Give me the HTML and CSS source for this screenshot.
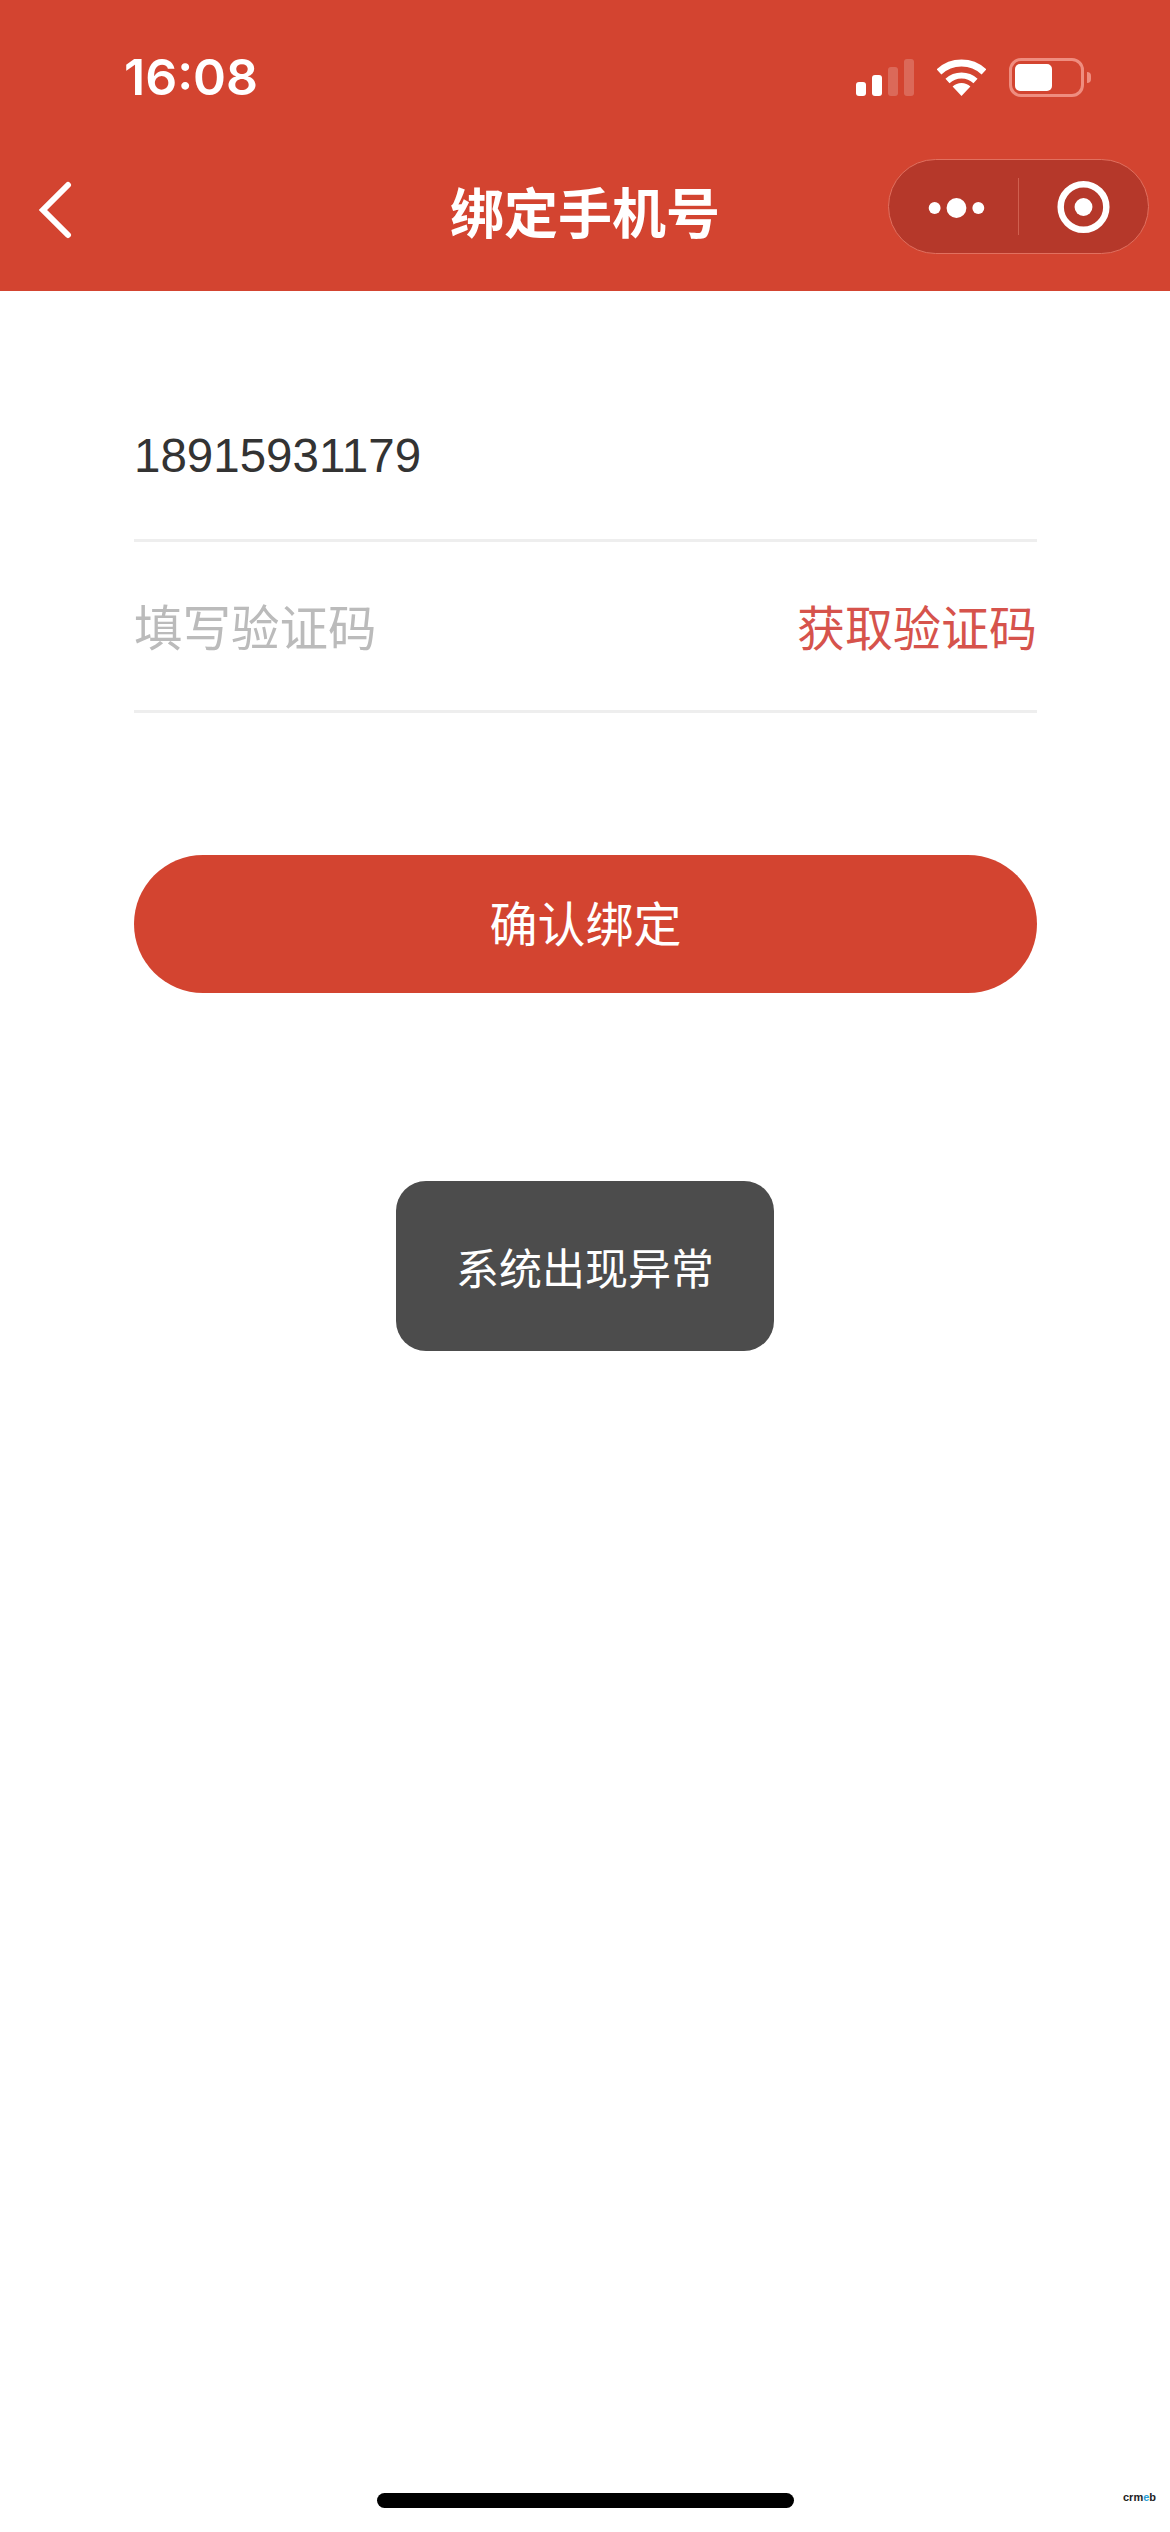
FILE: index.html
```html
<!DOCTYPE html>
<html lang="zh-CN">

<head>
    <meta charset="UTF-8">
    <meta name="viewport" content="width=device-width, initial-scale=1.0">
    <title>绑定手机号</title>
    <link rel="stylesheet" href="styles.css">
</head>
<body>
<header class="header">
    <div class="status">
        <span class="time">16:08</span>
        <div class="status-icons">
            <div class="signal">
                <i class="bar bar1"></i>
                <i class="bar bar2"></i>
                <i class="bar bar3"></i>
                <i class="bar bar4"></i>
            </div>
            <svg class="wifi" width="49" height="37" viewBox="0 0 49 37">
                <path d="M2 12.9A33 33 0 0 1 47 12.9" fill="none" stroke="#fff" stroke-width="7"/>
                <path d="M10.5 22A20.5 20.5 0 0 1 38.5 22" fill="none" stroke="#fff" stroke-width="6"/>
                <path d="M24.5 37L15.6 27.4A13 13 0 0 1 33.4 27.4Z" fill="#fff"/>
            </svg>
            <div class="battery">
                <div class="battery-box"><div class="battery-fill"></div></div>
                <div class="battery-tip"></div>
            </div>
        </div>
    </div>
    <nav class="nav">
        <svg class="back" width="34" height="58" viewBox="0 0 34 58">
            <path d="M30 4L5 29L30 54" fill="none" stroke="#fff" stroke-width="6" stroke-linecap="round"/>
        </svg>
        <h1 class="title">绑定手机号</h1>
        <div class="capsule">
            <svg class="capsule-btn" width="130" height="93" viewBox="0 0 130 93">
                <circle cx="46" cy="48" r="6" fill="#fff"/>
                <circle cx="68" cy="48" r="10" fill="#fff"/>
                <circle cx="90" cy="48" r="6" fill="#fff"/>
            </svg>
            <div class="capsule-line"></div>
            <svg class="capsule-btn" width="130" height="93" viewBox="0 0 130 93">
                <circle cx="65" cy="47" r="23" fill="none" stroke="#fff" stroke-width="6.5"/>
                <circle cx="65" cy="47" r="9" fill="#fff"/>
            </svg>
        </div>
    </nav>
</header>

<main class="form">
    <div class="row"><span class="phone">18915931179</span></div>
    <div class="row row-code">
        <span class="placeholder">填写验证码</span>
        <span class="get-code">获取验证码</span>
    </div>
    <button class="submit" type="button">确认绑定</button>
</main>

<div class="toast-wrap">
    <div class="toast">系统出现异常</div>
</div>

<div class="home-bar"></div>
<div class="mark">crm<span class="mark-e">e</span>b</div>
</body>

</html>
```

FILE: styles.css
```css
* {
    box-sizing: border-box;
}
html, body {
    height: 2532px;
    overflow: hidden;
}
body {
    margin: 0;
    position: relative;
    background-color: #fff;
    font-family: "Liberation Sans", "Noto Sans CJK SC", sans-serif;
}
.header {
    height: 291px;
    background-color: #d34430;
    color: #fff;
}
.status {
    height: 154px;
    padding: 0 79px 0 124px;
    display: flex;
    align-items: center;
    justify-content: space-between;
}
.time {
    font-family: Inter, sans-serif;
    font-size: 50px;
    font-weight: 600;
}
.status-icons {
    display: flex;
    align-items: center;
    gap: 23px;
}
.signal {
    display: flex;
    align-items: flex-end;
    gap: 6px;
    height: 37px;
}
.bar {
    display: block;
    width: 10px;
    border-radius: 3px;
    background-color: #fff;
}
.bar1 { height: 14px; }
.bar2 { height: 21px; }
.bar3 { height: 29px; opacity: .2; }
.bar4 { height: 37px; opacity: .2; }
.battery {
    display: flex;
    align-items: center;
    gap: 3px;
}
.battery-box {
    width: 75px;
    height: 39px;
    padding: 3px;
    border: 3px solid #ef8d7f;
    border-radius: 12px;
}
.battery-fill {
    width: 37px;
    height: 100%;
    border-radius: 5px;
    background-color: #fff;
}
.battery-tip {
    width: 4px;
    height: 11px;
    border-radius: 0 4px 4px 0;
    background-color: #ef8d7f;
}
.nav {
    height: 105px;
    padding: 0 21px;
    display: grid;
    grid-template-columns: 1fr auto 1fr;
    align-items: center;
}
.back {
    margin: 7px 0 0 17px;
}
.title {
    margin: 17px 0 0;
    font-size: 54px;
    font-weight: 700;
    line-height: 1.2;
}
.capsule {
    justify-self: end;
    width: 261px;
    height: 95px;
    display: flex;
    align-items: center;
    border: 1px solid #e1705f;
    border-radius: 48px;
    background-color: #b5382a;
}
.capsule-line {
    width: 1px;
    height: 57px;
    background-color: #d0604f;
}
.form {
    padding: 80px 133px 0 134px;
}
.row {
    height: 171px;
    display: flex;
    align-items: center;
    justify-content: space-between;
    border-bottom: 3px solid #eee;
    font-size: 48.5px;
}
.row-code {
    padding-bottom: 3px;
}
.phone {
    font-size: 47.5px;
    color: #333;
}
.placeholder {
    color: #bbb;
}
.get-code {
    color: #d6534c;
    font-size: 48px;
}
.submit {
    display: block;
    width: 100%;
    height: 138px;
    margin-top: 142px;
    padding: 0 0 6px;
    border: none;
    border-radius: 69px;
    background-color: #d34430;
    color: #fff;
    font-family: inherit;
    font-size: 48px;
}
.toast-wrap {
    position: absolute;
    top: 1181px;
    left: 0;
    right: 0;
    display: flex;
    justify-content: center;
}
.toast {
    width: 378px;
    height: 170px;
    display: flex;
    align-items: center;
    justify-content: center;
    border-radius: 30px;
    background-color: #4c4c4c;
    color: #fff;
    font-size: 43px;
}
.home-bar {
    position: absolute;
    left: 377px;
    top: 2493px;
    width: 417px;
    height: 15px;
    border-radius: 8px;
    background-color: #000;
}
.mark {
    position: absolute;
    left: 1123px;
    top: 2491px;
    font-family: "Liberation Sans", sans-serif;
    font-size: 11px;
    font-weight: 700;
    line-height: 13px;
    color: #222;
}
.mark-e {
    color: #2a9fd8;
}
```
